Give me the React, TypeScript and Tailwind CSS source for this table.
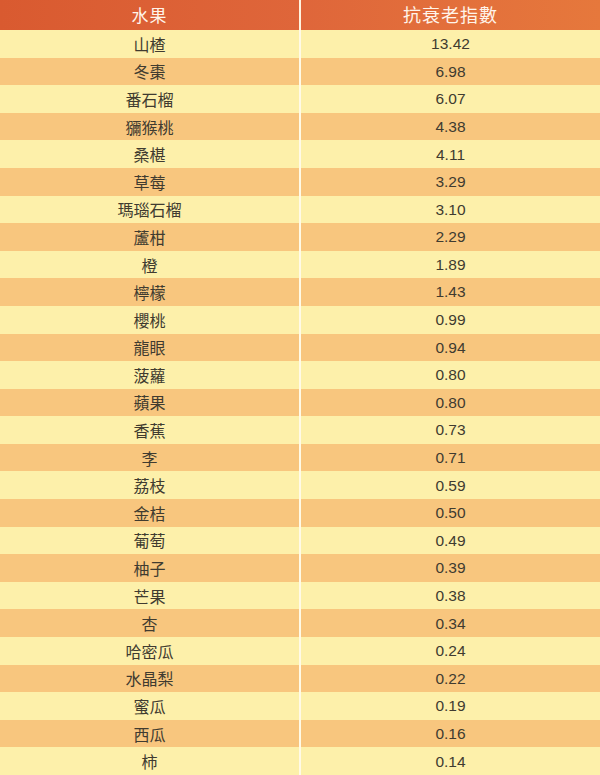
import React from "react";

const rows: [string, string][] = [
  ["山楂", "13.42"],
  ["冬棗", "6.98"],
  ["番石榴", "6.07"],
  ["獼猴桃", "4.38"],
  ["桑椹", "4.11"],
  ["草莓", "3.29"],
  ["瑪瑙石榴", "3.10"],
  ["蘆柑", "2.29"],
  ["橙", "1.89"],
  ["檸檬", "1.43"],
  ["櫻桃", "0.99"],
  ["龍眼", "0.94"],
  ["菠蘿", "0.80"],
  ["蘋果", "0.80"],
  ["香蕉", "0.73"],
  ["李", "0.71"],
  ["荔枝", "0.59"],
  ["金桔", "0.50"],
  ["葡萄", "0.49"],
  ["柚子", "0.39"],
  ["芒果", "0.38"],
  ["杏", "0.34"],
  ["哈密瓜", "0.24"],
  ["水晶梨", "0.22"],
  ["蜜瓜", "0.19"],
  ["西瓜", "0.16"],
  ["柿", "0.14"],
];

export default function App() {
  return (
    <div className="w-[600px] h-[775px] bg-[#fcf0b0] flex flex-col overflow-hidden">
      <div className="flex h-[30px] bg-gradient-to-r from-[#d95a30] via-[#df663a] to-[#e6783c] text-[#fff4ea]">
        <div className="w-[299px] flex items-center justify-center text-[17px] tracking-[1px] font-['Noto_Sans_CJK_TC',sans-serif]">
          水果
        </div>
        <div className="w-[2px] bg-[#fff3e0]" />
        <div className="flex-1 flex items-center justify-center text-[18px] tracking-[1px] font-['Noto_Sans_CJK_TC',sans-serif]">
          抗衰老指數
        </div>
      </div>
      {rows.map(([name, val], i) => (
        <div
          key={i}
          className={
            "flex h-[27.6px] shrink-0 text-[#403b30] " +
            (i % 2 === 0 ? "bg-[#fdf0aa]" : "bg-[#f8c67e]")
          }
        >
          <div className="w-[299px] flex items-center justify-center text-[16px] font-['Noto_Sans_CJK_TC',sans-serif]">
            {name}
          </div>
          <div className="w-[2px] bg-[#fffae6]" />
          <div className="flex-1 flex items-center justify-center text-[15.5px] font-['Liberation_Sans',Arial,sans-serif]">
            {val}
          </div>
        </div>
      ))}
    </div>
  );
}
